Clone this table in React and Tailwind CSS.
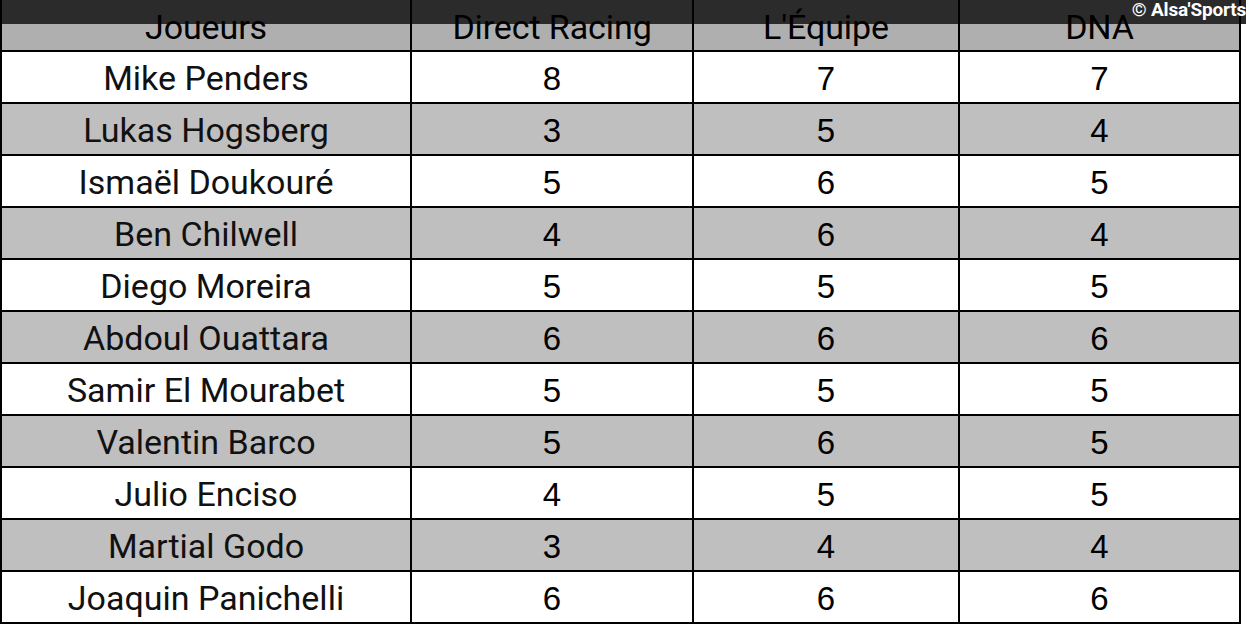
const players = [
  ['Mike Penders', 8, 7, 7],
  ['Lukas Hogsberg', 3, 5, 4],
  ['Ismaël Doukouré', 5, 6, 5],
  ['Ben Chilwell', 4, 6, 4],
  ['Diego Moreira', 5, 5, 5],
  ['Abdoul Ouattara', 6, 6, 6],
  ['Samir El Mourabet', 5, 5, 5],
  ['Valentin Barco', 5, 6, 5],
  ['Julio Enciso', 4, 5, 5],
  ['Martial Godo', 3, 4, 4],
  ['Joaquin Panichelli', 6, 6, 6],
]

const headers = ['Joueurs', 'Direct Racing', "L'Équipe", 'DNA']

export default function App() {
  return (
    <div className="relative w-[1246px] h-[624px] overflow-hidden bg-[linear-gradient(to_bottom,#2b2b2b_24px,#ffffff_24px)]">
      <div className="w-[1241px] grid grid-cols-[408px_280px_264px_279px] gap-[2px] bg-black px-[2px] pb-[2px] text-[#111]">
        {headers.map((h) => (
          <div
            key={h}
            className="h-[50px] flex items-center justify-center pt-[4px] bg-[linear-gradient(to_bottom,#2b2b2b_24px,#afafaf_24px)] font-['Roboto',sans-serif] text-[34px] tracking-[-0.1px] text-black"
          >
            {h}
          </div>
        ))}
        {players.map((p, i) => {
          const bg = i % 2 === 1 ? 'bg-[#bfbfbf]' : 'bg-white'
          return [
            <div
              key={p[0]}
              className={`h-[50px] flex items-center justify-center pt-[3px] ${bg} font-['Roboto',sans-serif] text-[34px]`}
            >
              {p[0]}
            </div>,
            ...p.slice(1).map((n, j) => (
              <div
                key={p[0] + j}
                className={`h-[50px] flex items-center justify-center pt-[4px] ${bg} font-['Liberation_Sans',Arial,sans-serif] text-[33px] text-black`}
              >
                {n}
              </div>
            )),
          ]
        })}
      </div>
      <div className="absolute top-0 right-0 text-white font-['Roboto',sans-serif] font-bold text-[19px] leading-[20px] tracking-[-0.2px]">
        © Alsa'Sports
      </div>
    </div>
  )
}
